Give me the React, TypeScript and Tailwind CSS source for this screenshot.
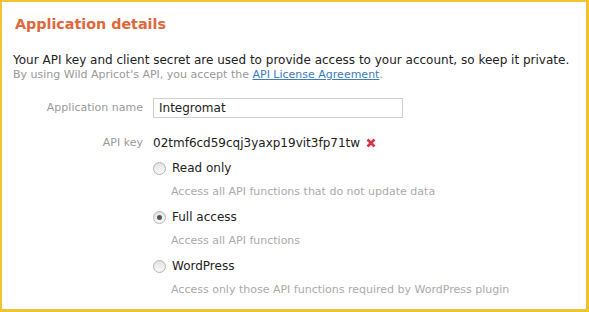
import React from "react";

const font = { fontFamily: '"DejaVu Sans", Verdana, sans-serif' };

function Radio({ checked }: { checked?: boolean }) {
  return (
    <span className="flex h-[13px] w-[13px] shrink-0 items-center justify-center rounded-full border border-[#b5b5b5] bg-gradient-to-b from-[#e2e2e2] to-[#fafafa]">
      {checked && <span className="h-[5px] w-[5px] rounded-full bg-[#555]" />}
    </span>
  );
}

const options = [
  { label: "Read only", desc: "Access all API functions that do not update data" },
  { label: "Full access", desc: "Access all API functions", checked: true },
  { label: "WordPress", desc: "Access only those API functions required by WordPress plugin" },
];

export default function App() {
  return (
    <div
      className="h-[312px] w-[589px] overflow-hidden border-t-2 border-r-[3px] border-b-[3px] border-l-2 border-[#f1c232] bg-white"
      style={font}
    >
      <h2 className="ml-[13px] mt-[13px] text-[14.3px] font-bold leading-[18px] text-[#e0663b]">
        Application details
      </h2>
      <p className="ml-[11px] mt-[20px] text-[12px] leading-[15px] text-[#222]">
        Your API key and client secret are used to provide access to your account, so keep it private.
      </p>
      <p className="ml-[11px] text-[11px] leading-[14px] text-[#999]">
        By using Wild Apricot's API, you accept the{" "}
        <a className="text-[#3b7dbf] underline">API License Agreement</a>.
      </p>

      <div className="mt-[16px] grid grid-cols-[141px_1fr] gap-x-[10px]">
        <label className="flex h-[20px] items-center justify-end text-[11px] text-[#999]">
          Application name
        </label>
        <div className="flex h-[20px] w-[250px] items-center border border-[#cfcfcf] px-[5px] text-[12px] text-[#222]">
          Integromat
        </div>

        <label className="mt-[15px] flex h-[20px] items-center justify-end text-[11px] text-[#999]">
          API key
        </label>
        <div className="mt-[15px] flex h-[20px] items-center gap-[6px] text-[12px] text-[#222]">
          <span>02tmf6cd59cqj3yaxp19vit3fp71tw</span>
          <svg width="10" height="10" viewBox="0 0 10 10">
            <path d="M1.5 1.5 L8.5 8.5 M8.5 1.5 L1.5 8.5" stroke="#d9334a" strokeWidth="2.6" strokeLinecap="butt" />
          </svg>
        </div>

        <div />
        <div className="mt-[7px] flex flex-col">
          {options.map((o) => (
            <div key={o.label} className="mb-[10px]">
              <div className="flex h-[16px] items-center gap-[6px] text-[12px] text-[#222]">
                <Radio checked={o.checked} />
                <span>{o.label}</span>
              </div>
              <div className="ml-[18px] mt-[9px] h-[14px] text-[11px] leading-[14px] text-[#aaa]">
                {o.desc}
              </div>
            </div>
          ))}
        </div>
      </div>
    </div>
  );
}
